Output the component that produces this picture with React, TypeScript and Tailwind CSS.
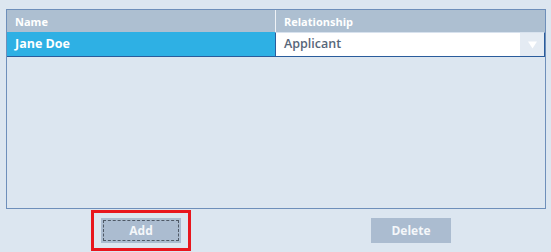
import React from "react";

export default function App() {
  return (
    <div
      className="w-[551px] h-[252px] bg-[#dce6f0] pt-[9px] pl-[6px] overflow-hidden"
      style={{ fontFamily: '"Open Sans", "Noto Sans", sans-serif' }}
    >
      <div className="w-[540px] h-[200px] border border-[#6e8fba] flex flex-col">
        <div className="h-[22px] flex bg-[#adbfd1] text-white text-[11px] font-bold leading-none">
          <div className="w-[268px] pl-[8px] flex items-center">Name</div>
          <div className="w-[1px] bg-white/80" />
          <div className="flex-1 pl-[8px] flex items-center">Relationship</div>
        </div>
        <div className="h-[25px] flex">
          <div className="w-[268px] bg-[#2eb0e4] border-b border-[#2a5c9c] pl-[8px] flex items-center text-white text-[12.5px] font-bold">
            Jane Doe
          </div>
          <div className="flex-1 flex border border-[#2a5c9c] border-t-[#d8e2ee] bg-white">
            <div className="flex-1 pl-[8px] flex items-center text-[#566679] text-[12.5px] font-semibold">
              Applicant
            </div>
            <div className="w-[24px] bg-[#e4ebf3] flex items-center justify-center">
              <svg width="9" height="8" viewBox="0 0 9 8">
                <path d="M0 0.5 L9 0.5 L4.5 7.5 Z" fill="#ffffff" />
              </svg>
            </div>
          </div>
        </div>
        <div className="flex-1" />
      </div>
      <div className="w-[540px] grid grid-cols-2 mt-[1px] text-[12px] font-bold">
        <div className="flex justify-center">
          <div className="border-[3px] border-[#e8161d] px-[7px] py-[5px]">
            <div className="w-[80px] h-[25px] bg-[#abbcd0] text-[#f4f7fa] flex items-center justify-center outline-1 outline-dashed outline-[#4f5966] outline-offset-[-3px]">
              Add
            </div>
          </div>
        </div>
        <div className="flex justify-center">
          <div className="border-[3px] border-transparent px-[7px] py-[5px]">
            <div className="w-[80px] h-[25px] bg-[#abbcd0] text-[#f4f7fa] flex items-center justify-center">
              Delete
            </div>
          </div>
        </div>
      </div>
    </div>
  );
}
